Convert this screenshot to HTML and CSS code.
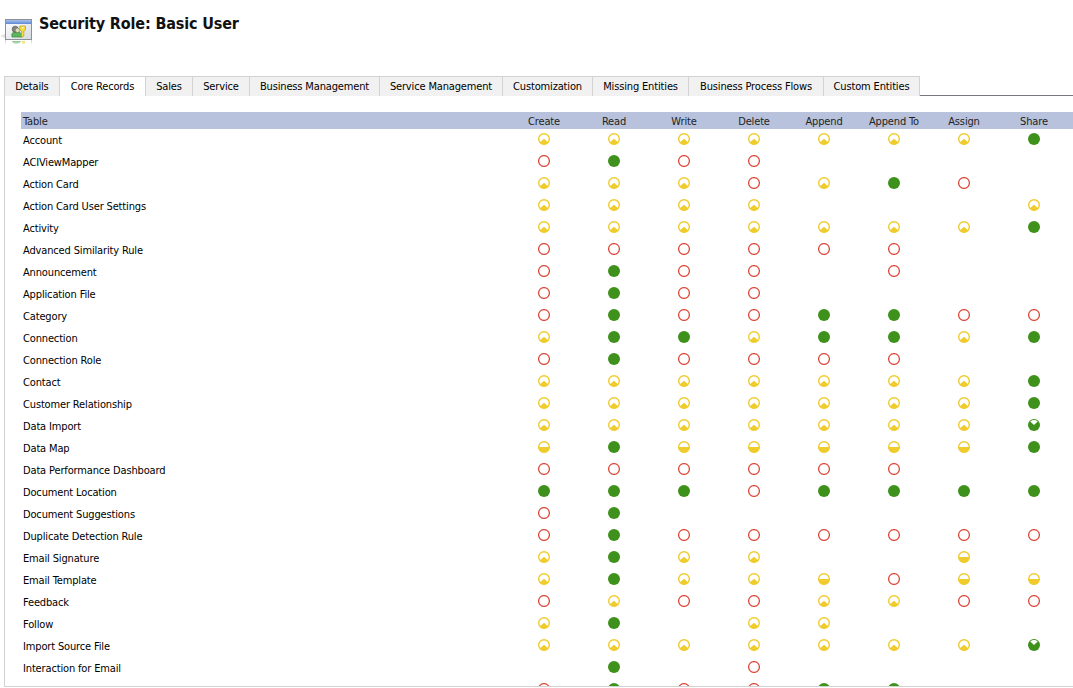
FILE: index.html
```html
<!DOCTYPE html>
<html lang="en">
<head>
<meta charset="utf-8">
<title>Security Role: Basic User</title>
<link rel="stylesheet" href="styles.css">
</head>
<body>
<svg class="defs" aria-hidden="true">
  <symbol id="none" viewBox="0 0 12 12"><circle cx="6" cy="6" r="5.4" fill="#fff" stroke="#dc4535" stroke-width="1.25"/></symbol>
  <symbol id="user" viewBox="0 0 12 12"><circle cx="6" cy="6" r="5.3" fill="#fff" stroke="#f0cb2c" stroke-width="1.4"/><path d="M6 5.8 L10.3 9.4 A5.6 5.6 0 0 1 1.7 9.4Z" fill="#f0cb2c"/></symbol>
  <symbol id="unit" viewBox="0 0 12 12"><circle cx="6" cy="6" r="5.3" fill="#fff" stroke="#f0cb2c" stroke-width="1.4"/><path d="M.3 6H11.7A5.7 5.7 0 0 1 .3 6Z" fill="#f0cb2c"/></symbol>
  <symbol id="deep" viewBox="0 0 12 12"><circle cx="6" cy="6" r="6" fill="#3e911b"/><path d="M2.2 2.4Q6 -.5 9.8 2.4L6 6Z" fill="#fff"/></symbol>
  <symbol id="org" viewBox="0 0 12 12"><circle cx="6" cy="6" r="6" fill="#3e911b"/></symbol>
</svg>
<header class="header">
  <svg class="logo" viewBox="0 0 32 32">
    <defs>
      <linearGradient id="bar" x2="0" y2="1"><stop stop-color="#a9c2ee"/><stop offset="1" stop-color="#5d87d2"/></linearGradient>
      <linearGradient id="pane" x2="1" y2="1"><stop stop-color="#fff"/><stop offset="1" stop-color="#d5dbe2"/></linearGradient>
      <linearGradient id="fade" x2="0" y2="1"><stop stop-color="#fff" stop-opacity="0"/><stop offset="1" stop-color="#fff" stop-opacity=".9"/></linearGradient>
    </defs>
    <path d="M0 20L5 18V22Z" fill="#e2e2e2"/>
    <rect x="5.5" y="3.5" width="26" height="20" fill="url(#pane)" stroke="#8b9099"/>
    <rect x="6" y="4" width="25" height="4" fill="url(#bar)"/>
    <path d="M12 21Q11 16 15 16H17Q22 16 22 21Z" fill="#5eb65a" stroke="#388343" stroke-width=".7"/>
    <circle cx="15.2" cy="13.2" r="3" fill="#858579" stroke="#5d6258" stroke-width=".8"/>
    <circle cx="17.5" cy="14.3" r="2.3" fill="#dcddbb" stroke="#687a5a" stroke-width=".6"/>
    <path d="M19.8 10H25.5V14L23.8 15V20L22.5 21.3L21.5 20V15L19.8 14Z" fill="#f6dc43" stroke="#c8a719" stroke-width=".8"/>
    <circle cx="22.8" cy="11.8" r=".8" fill="#fff"/>
    <path d="M5.5 24V29M31.5 24V29" stroke="#ccd0d4"/>
    <path d="M12 25H21Q20 28 16 28Q13 28 12 25Z" fill="#69b66a"/>
    <path d="M22 25H25V28H22Z" fill="#ead248"/>
    <rect x="5" y="24" width="27" height="5" fill="url(#fade)"/>
  </svg>
  <h1 class="title">Security Role: Basic User</h1>
</header>
<nav class="tabs">
  <div class="tab details"><span>Details</span></div>
  <div class="tab core active"><span>Core Records</span></div>
  <div class="tab sales"><span>Sales</span></div>
  <div class="tab service"><span>Service</span></div>
  <div class="tab business"><span>Business Management</span></div>
  <div class="tab servicemgmt"><span>Service Management</span></div>
  <div class="tab customization"><span>Customization</span></div>
  <div class="tab missing"><span>Missing Entities</span></div>
  <div class="tab flows"><span>Business Process Flows</span></div>
  <div class="tab custom"><span>Custom Entities</span></div>
  <div class="tabline"></div>
</nav>
<main class="panel">
  <div class="row head"><span class="name">Table</span><span>Create</span><span>Read</span><span>Write</span><span>Delete</span><span>Append</span><span>Append To</span><span>Assign</span><span>Share</span></div>
  <div id="rows"></div>
</main>
<script src="rows.js"></script>
</body>
</html>
```
FILE: rows.js
```js
// One letter per privilege: n none, u user, b business unit, d parent-child, o organization, . not applicable
const rows = [
  ["Account", "uuuuuuuo"],
  ["ACIViewMapper", "nonn...."],
  ["Action Card", "uuunuon."],
  ["Action Card User Settings", "uuuu...u"],
  ["Activity", "uuuuuuuo"],
  ["Advanced Similarity Rule", "nnnnnn.."],
  ["Announcement", "nonn.n.."],
  ["Application File", "nonn...."],
  ["Category", "nonnoonn"],
  ["Connection", "uoouoouo"],
  ["Connection Role", "nonnnn.."],
  ["Contact", "uuuuuuuo"],
  ["Customer Relationship", "uuuuuuuo"],
  ["Data Import", "uuuuuuud"],
  ["Data Map", "bobbbbbo"],
  ["Data Performance Dashboard", "nnnnnn.."],
  ["Document Location", "ooonoooo"],
  ["Document Suggestions", "no......"],
  ["Duplicate Detection Rule", "nonnnnnn"],
  ["Email Signature", "uouu..b."],
  ["Email Template", "uouubnbb"],
  ["Feedback", "nunnuunn"],
  ["Follow", "uo.uu..."],
  ["Import Source File", "uuuuuuud"],
  ["Interaction for Email", ".o.n...."],
  ["", "nonnoo.."]
];
const level = { n: "none", u: "user", b: "unit", d: "deep", o: "org" };
document.getElementById("rows").innerHTML = rows.map(([name, cells]) =>
  `<div class="row"><span class="name">${name}</span>` +
  [...cells].map(c => `<span>${level[c] ? `<svg class="dot"><use href="#${level[c]}"/></svg>` : ""}</span>`).join("") +
  `</div>`).join("");
```
FILE: styles.css
```css
* { box-sizing: border-box; }
body {
  margin: 0;
  height: 688px;
  overflow: hidden;
  background: #fff;
  color: #000;
  font: 11px/14px "DejaVu Sans Condensed", "DejaVu Sans", sans-serif;
  font-stretch: condensed;
  letter-spacing: -.15px;
}
.defs { display: none; }
.header { display: flex; height: 76px; padding: 16px 0 0; }
.logo { width: 32px; height: 32px; flex: none; }
.title { margin: -3px 0 0 7px; font-size: 16px; line-height: 22px; font-weight: bold; color: #111; white-space: nowrap; }
.tabs { display: flex; height: 20px; padding-left: 4px; }
.tab {
  flex: none;
  background: #f1f1f1;
  border-top: 1px solid #d2d2d2;
  border-left: 1px solid #d2d2d2;
  text-align: center;
  line-height: 20px;
  white-space: nowrap;
}
.active { background: #fff; }
.details { width: 55px; }
.core { width: 86px; }
.sales { width: 47px; }
.service { width: 57px; }
.business { width: 130px; }
.servicemgmt { width: 123px; }
.customization { width: 90px; }
.missing { width: 96px; }
.flows { width: 135px; }
.custom { width: 97px; border-right: 1px solid #d2d2d2; }
.tabline { flex: 1; border-bottom: 1px solid #777783; }
.panel {
  height: 591px;
  margin-left: 4px;
  padding: 16px 0 0 16px;
  overflow: hidden;
  border-left: 1px solid #d2d2d2;
  border-bottom: 1px solid #d2d2d2;
}
.row {
  display: grid;
  grid-template-columns: 488px repeat(8, 70px);
  height: 22px;
  line-height: 24px;
  text-align: center;
  white-space: nowrap;
}
.row .name { text-align: left; padding-left: 2px; }
.head { height: 17px; line-height: 20px; background: #b8c2dc; color: #222; }
.dot { display: block; width: 12px; height: 12px; margin: 4px auto 0; }
```
